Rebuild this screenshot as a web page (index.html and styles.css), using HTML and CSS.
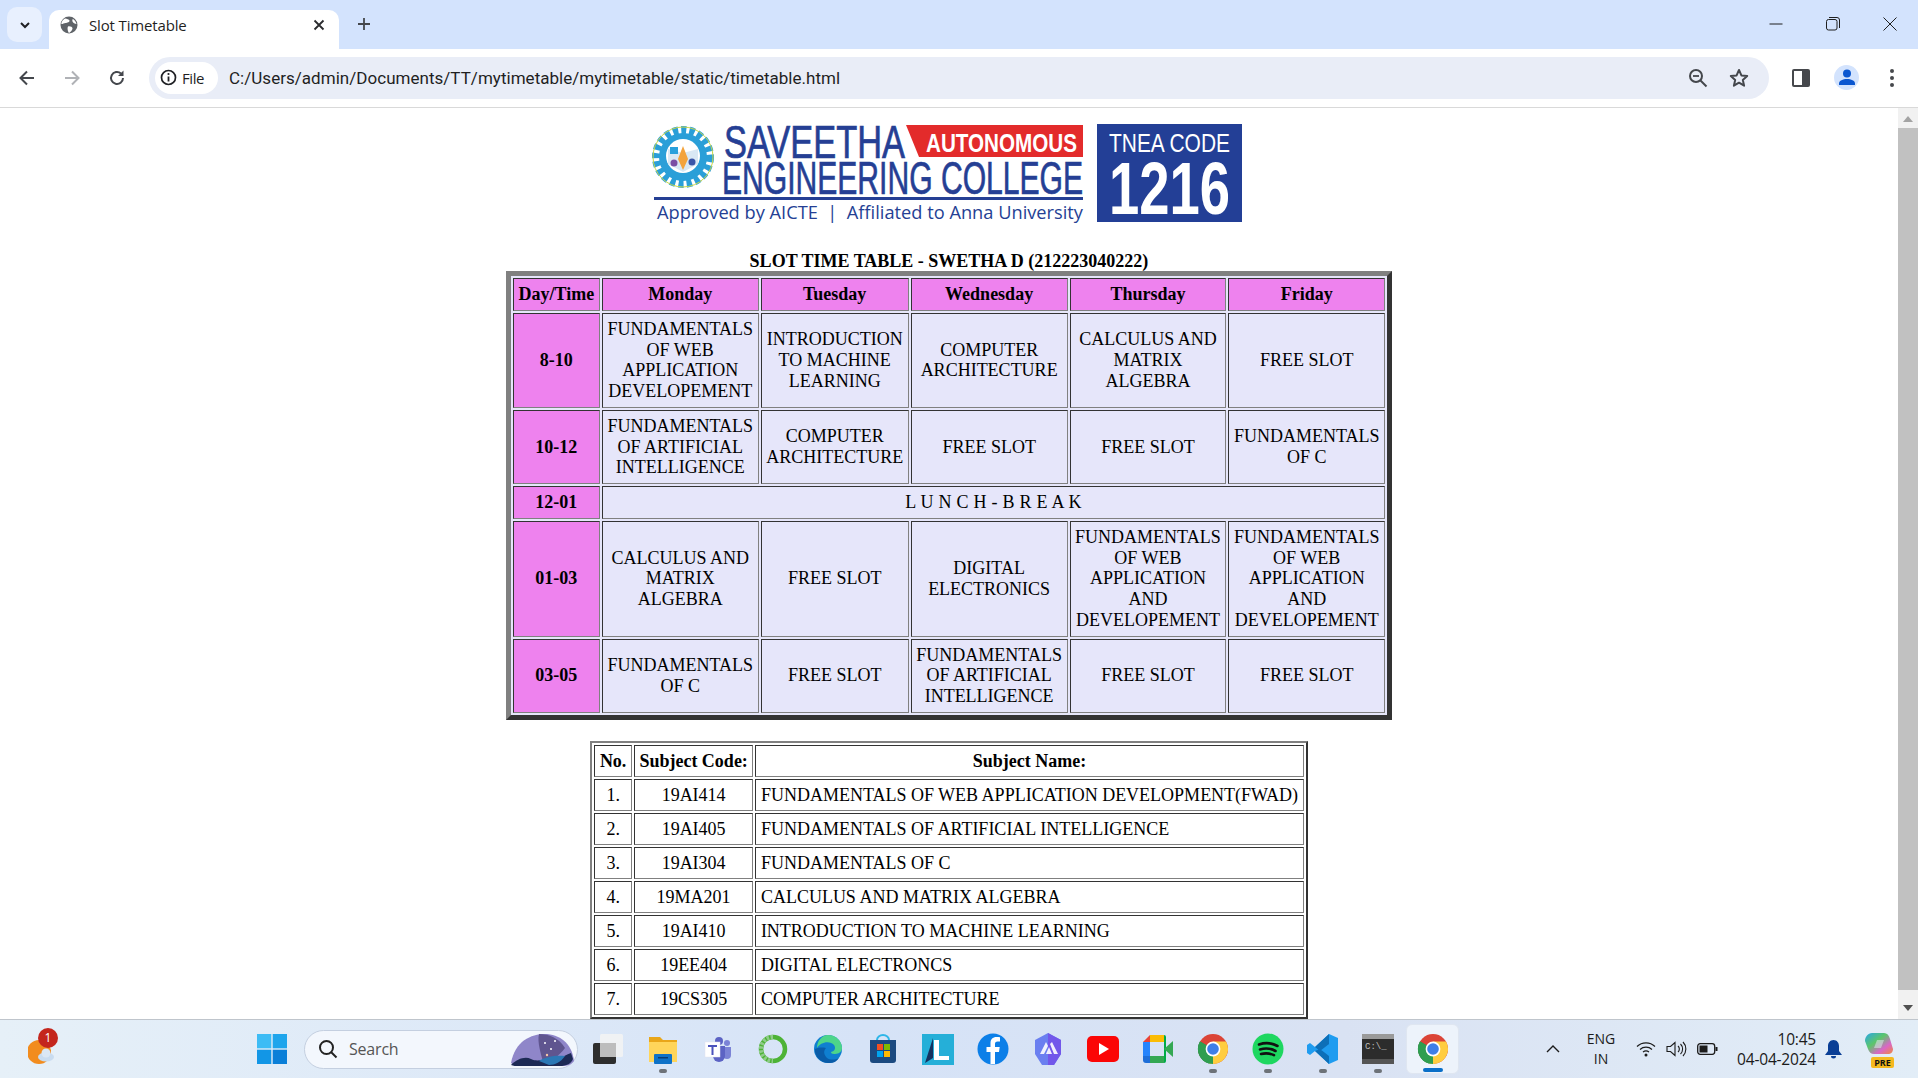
FILE: index.html
```html
<!DOCTYPE html>
<html lang="en">
<head>
<meta charset="utf-8">
<title>Slot Timetable</title>
<link rel="stylesheet" href="styles.css">
</head>
<body>
<svg class="defs" width="0" height="0" aria-hidden="true">
  <defs>
    <symbol id="chrome" viewBox="0 0 32 32">
      <circle cx="16" cy="16" r="15" fill="#db4437"/>
      <path d="M16 16 L3 8.5 A15 15 0 0 0 12 30.5 Z" fill="#0f9d58"/>
      <path d="M16 16 L12 30.5 A15 15 0 0 0 29 8.5 L16 8.5 Z" fill="#ffcd40"/>
      <path d="M16 16 L16 31 A15 15 0 0 1 3 8.5 Z" fill="#2f9e50"/>
      <circle cx="16" cy="16" r="7.4" fill="#fff"/>
      <circle cx="16" cy="16" r="5.8" fill="#3f7fe8"/>
    </symbol>
  </defs>
</svg>
<header class="tabstrip">
  <button class="tabs-menu"><svg width="12" height="12" viewBox="0 0 12 12"><path d="M2 4l4 4 4-4" fill="none" stroke="#1f2024" stroke-width="2"/></svg></button>
  <div class="tab">
    <svg class="favicon" width="18" height="18" viewBox="0 0 18 18"><circle cx="9" cy="9" r="8.5" fill="#5f6368"/><path d="M5 2.500c2 .5 4 .5 4.500 2S7 7 5.500 7 2 8.500 1.500 8 2 4 5 2.500zM8 10.500c2-.5 4.500.5 4.500 2S10 16.500 9 17c-1-1-2-5-1-6.500zM13 3c1 .5 3 2.500 3.500 5-1.500 0-3.500-1-4-2.500S12.500 3 13 3z" fill="#fff"/></svg>
    <span class="tab-title">Slot Timetable</span>
    <svg class="tab-close" width="12" height="12" viewBox="0 0 12 12"><path d="M1.500 1.500l9 9M10.500 1.500l-9 9" stroke="#2a2b2e" stroke-width="1.800"/></svg>
  </div>
  <svg class="newtab" width="14" height="14" viewBox="0 0 14 14"><path d="M7 1v12M1 7h12" stroke="#44474c" stroke-width="1.800"/></svg>
  <div class="winctl">
    <svg width="14" height="14" viewBox="0 0 14 14"><path d="M0.500 7h13" stroke="#1f1f1f" stroke-width="1"/></svg>
    <svg width="14" height="14" viewBox="0 0 14 14"><rect x="0.500" y="2.500" width="10.500" height="10.500" rx="2" fill="none" stroke="#1f1f1f"/><path d="M3 .5h8a2.500 2.500 0 0 1 2.500 2.500v8" fill="none" stroke="#1f1f1f"/></svg>
    <svg width="14" height="14" viewBox="0 0 14 14"><path d="M.500.500l13 13M13.500.500l-13 13" stroke="#1f1f1f" stroke-width="1"/></svg>
  </div>
</header>
<nav class="toolbar">
  <svg class="navbtn" width="18" height="18" viewBox="0 0 18 18"><path d="M16 9H3M9 2.500L2.500 9 9 15.500" fill="none" stroke="#44474c" stroke-width="2"/></svg>
  <svg class="navbtn" width="18" height="18" viewBox="0 0 18 18"><path d="M2 9h13M9 2.500L15.500 9 9 15.500" fill="none" stroke="#b0b2b6" stroke-width="2"/></svg>
  <svg class="navbtn" width="18" height="18" viewBox="0 0 18 18"><path d="M15 9a6 6 0 1 1-2-4.500" fill="none" stroke="#44474c" stroke-width="2"/><path d="M15.500 1.500v5.500H10z" fill="#44474c"/></svg>
  <div class="omnibox">
    <div class="chip">
      <svg width="17" height="17" viewBox="0 0 17 17"><circle cx="8.500" cy="8.500" r="7" fill="none" stroke="#1f2024" stroke-width="1.700"/><path d="M8.500 7.500v5" stroke="#1f2024" stroke-width="1.800"/><circle cx="8.500" cy="5" r="1.100" fill="#1f2024"/></svg>
      <span>File</span>
    </div>
    <span class="url">C:/Users/admin/Documents/TT/mytimetable/mytimetable/static/timetable.html</span>
    <svg class="zoomicon" width="20" height="20" viewBox="0 0 20 20"><circle cx="8" cy="8" r="6" fill="none" stroke="#44474c" stroke-width="2"/><path d="M12.500 12.500l6 6" stroke="#44474c" stroke-width="2"/><path d="M5 8h6" stroke="#44474c" stroke-width="1.800"/></svg>
    <svg class="star" width="20" height="20" viewBox="0 0 20 20"><path d="M10 2l2.400 5.400 5.800.6-4.400 3.900 1.300 5.800L10 14.700l-5.100 3 1.300-5.800L1.800 8l5.800-.6z" fill="none" stroke="#44474c" stroke-width="2" stroke-linejoin="round"/></svg>
  </div>
  <svg class="sidepanel" width="18" height="18" viewBox="0 0 18 18"><rect width="18" height="18" rx="2" fill="#46484c"/><rect x="2" y="2" width="8" height="14" fill="#fff"/></svg>
  <div class="avatar"><svg width="18" height="17" viewBox="0 0 18 17"><circle cx="9" cy="4.500" r="4" fill="#0b57d0"/><path d="M1 16v-1.500C1 11.500 5 10 9 10s8 1.500 8 4.500V16z" fill="#0b57d0"/></svg></div>
  <svg class="menu" width="6" height="18" viewBox="0 0 6 18"><circle cx="3" cy="2" r="2" fill="#46484c"/><circle cx="3" cy="9" r="2" fill="#46484c"/><circle cx="3" cy="16" r="2" fill="#46484c"/></svg>
</nav>
<div class="viewport">
  <main class="page">
    <div class="logo">
      <svg width="592" height="112" viewBox="0 -10 592 112" role="img" aria-label="Saveetha Engineering College">
        <circle cx="31" cy="35" r="26" fill="none" stroke="#2a9fd8" stroke-width="10" stroke-dasharray="5 3"/>
        <circle cx="31" cy="35" r="30" fill="none" stroke="#c7d64a" stroke-width="1"/>
        <circle cx="31" cy="35" r="24" fill="#2a9fd8"/>
        <circle cx="31" cy="34" r="17" fill="#fff"/>
        <path d="M16 27l15 4 15-4v15l-15 8-15-8z" fill="#d9e8f4"/>
        <path d="M31 24l5 13-5 11-5-11z" fill="#f3a33c"/>
        <rect x="18" y="25" width="8" height="7" fill="#29a0dc"/>
        <circle cx="22" cy="41" r="3.500" fill="#7b4ea3"/>
        <circle cx="40" cy="40" r="3.500" fill="#3a56a8"/>
        <text class="lg-navy" x="72" y="36" font-size="46" textLength="181" lengthAdjust="spacingAndGlyphs">SAVEETHA</text>
        <path d="M254 3H431V35H267z" fill="#e32b2b"/>
        <text class="lg-auto" x="274" y="30" font-size="25" textLength="151" lengthAdjust="spacingAndGlyphs">AUTONOMOUS</text>
        <text class="lg-navy" x="70" y="72" font-size="46" textLength="361" lengthAdjust="spacingAndGlyphs">ENGINEERING COLLEGE</text>
        <rect x="2" y="75" width="429" height="3" fill="#253f94"/>
        <text class="lg-sub" x="5" y="97" font-size="19" textLength="426" lengthAdjust="spacingAndGlyphs">Approved by AICTE  |  Affiliated to Anna University</text>
        <rect x="445" y="2" width="145" height="98" fill="#233f96"/>
        <text class="lg-tnea" x="457" y="30" font-size="25" textLength="121" lengthAdjust="spacingAndGlyphs">TNEA CODE</text>
        <text class="lg-code" x="457" y="92" font-size="74" textLength="121" lengthAdjust="spacingAndGlyphs">1216</text>
      </svg>
    </div>
    <h1 class="title">SLOT TIME TABLE - SWETHA D (212223040222)</h1>
    <table class="slots">
      <tr><th>Day/Time</th><th>Monday</th><th>Tuesday</th><th>Wednesday</th><th>Thursday</th><th>Friday</th></tr>
      <tr><th>8-10</th><td>FUNDAMENTALS OF WEB APPLICATION DEVELOPEMENT</td><td>INTRODUCTION TO MACHINE LEARNING</td><td>COMPUTER ARCHITECTURE</td><td>CALCULUS AND MATRIX ALGEBRA</td><td>FREE SLOT</td></tr>
      <tr><th>10-12</th><td>FUNDAMENTALS OF ARTIFICIAL INTELLIGENCE</td><td>COMPUTER ARCHITECTURE</td><td>FREE SLOT</td><td>FREE SLOT</td><td>FUNDAMENTALS OF C</td></tr>
      <tr><th>12-01</th><td colspan="5" class="lunch">L U N C H - B R E A K</td></tr>
      <tr><th>01-03</th><td>CALCULUS AND MATRIX ALGEBRA</td><td>FREE SLOT</td><td>DIGITAL ELECTRONICS</td><td>FUNDAMENTALS OF WEB APPLICATION AND DEVELOPEMENT</td><td>FUNDAMENTALS OF WEB APPLICATION AND DEVELOPEMENT</td></tr>
      <tr><th>03-05</th><td>FUNDAMENTALS OF C</td><td>FREE SLOT</td><td>FUNDAMENTALS OF ARTIFICIAL INTELLIGENCE</td><td>FREE SLOT</td><td>FREE SLOT</td></tr>
    </table>
    <table class="subjects">
      <tr><th>No.</th><th>Subject Code:</th><th>Subject Name:</th></tr>
      <tr><td>1.</td><td>19AI414</td><td class="name">FUNDAMENTALS OF WEB APPLICATION DEVELOPMENT(FWAD)</td></tr>
      <tr><td>2.</td><td>19AI405</td><td class="name">FUNDAMENTALS OF ARTIFICIAL INTELLIGENCE</td></tr>
      <tr><td>3.</td><td>19AI304</td><td class="name">FUNDAMENTALS OF C</td></tr>
      <tr><td>4.</td><td>19MA201</td><td class="name">CALCULUS AND MATRIX ALGEBRA</td></tr>
      <tr><td>5.</td><td>19AI410</td><td class="name">INTRODUCTION TO MACHINE LEARNING</td></tr>
      <tr><td>6.</td><td>19EE404</td><td class="name">DIGITAL ELECTRONCS</td></tr>
      <tr><td>7.</td><td>19CS305</td><td class="name">COMPUTER ARCHITECTURE</td></tr>
    </table>
  </main>
  <aside class="scrollbar">
    <svg class="arrow" width="10" height="6" viewBox="0 0 10 6"><path d="M5 0l5 6H0z" fill="#a3a3a3"/></svg>
    <div class="thumb"></div>
    <svg class="arrow" width="10" height="6" viewBox="0 0 10 6"><path d="M0 0h10L5 6z" fill="#505050"/></svg>
  </aside>
</div>
<footer class="taskbar">
  <div class="widget">
    <svg width="32" height="36" viewBox="0 0 32 36"><circle cx="11" cy="21" r="12" fill="#f28c1e"/><ellipse cx="18" cy="26" rx="8" ry="4.500" fill="#c9dcf0"/><circle cx="18" cy="22" r="4.500" fill="#dbe7f4"/></svg>
    <span class="badge">1</span>
  </div>
  <div class="start-slot">
    <svg width="30" height="30" viewBox="0 0 30 30"><rect width="14.300" height="14.300" fill="#3dbcf5"/><rect x="15.700" width="14.300" height="14.300" fill="#1ea5ec"/><rect y="15.700" width="14.300" height="14.300" fill="#1296e6"/><rect x="15.700" y="15.700" width="14.300" height="14.300" fill="#0a7fd8"/></svg>
  </div>
  <div class="search">
    <svg width="20" height="20" viewBox="0 0 20 20"><circle cx="8.500" cy="8.500" r="6.500" fill="none" stroke="#222" stroke-width="2"/><path d="M13 13l5.500 5.500" stroke="#222" stroke-width="2"/></svg>
    <span>Search</span>
    <svg class="search-art" width="66" height="34" viewBox="0 0 66 34"><path d="M2 30C6 8 22 1 36 1s27 9 29 27c-2 3-6 5-12 5H14C8 33 4 32 2 30z" fill="#8f86c9"/><path d="M30 1c10 0 20 4 26 14-6 8-14 14-22 14-2-8-6-20-4-28z" fill="#5f558f"/><path d="M2 32c6-6 14-9 20-6s10 0 16 2 14-4 24-8l2 6c-2 5-7 7-13 7H10c-3 0-6 0-8-1z" fill="#1d2a55"/><path d="M30 28c6-4 16-6 26-5-4 6-10 9-16 9z" fill="#2c78b5"/><circle cx="36" cy="10" r="1" fill="#fff"/><circle cx="42" cy="16" r="1" fill="#fff"/><circle cx="46" cy="8" r="1" fill="#fff"/><circle cx="38" cy="22" r="1.200" fill="#f5c6a5"/></svg>
  </div>
  <ul class="apps">
    <li>
      <svg width="30" height="30" viewBox="0 0 30 30"><rect x="0" y="9" width="23" height="21" rx="2" fill="#2e2e2e"/><rect x="7" y="0" width="23" height="23" rx="1.500" fill="#f3f3f3" opacity=".85"/><rect x="7" y="9" width="16" height="14" fill="#bdbdbd"/></svg>
    </li>
    <li class="open">
      <svg width="30" height="30" viewBox="0 0 30 30"><path d="M1 3h11l3 3h14v22H1z" fill="#e9a619"/><rect x="1" y="8" width="28" height="20" fill="#ffd55a"/><rect x="6" y="20" width="18" height="10" rx="1" fill="#0f72c8"/><rect x="10" y="23" width="10" height="1.500" fill="#083c74"/></svg>
    </li>
    <li>
      <svg width="28" height="28" viewBox="0 0 28 28"><circle cx="23" cy="8" r="3" fill="#7b83d6"/><path d="M19 12h8v8a4 4 0 0 1-8 0z" fill="#7b83d6"/><circle cx="15" cy="6" r="4" fill="#5c63c4"/><path d="M9 11h12v10a6 6 0 0 1-12 0z" fill="#5c63c4"/><rect x="1" y="7" width="15" height="15" fill="#fff" stroke="#e4e4ee" stroke-width=".5"/><path d="M4 10h9v2H9.500v8h-2v-8H4z" fill="#4b53bc"/></svg>
    </li>
    <li>
      <svg width="30" height="30" viewBox="0 0 30 30"><circle cx="15" cy="15" r="12" fill="none" stroke="#4db336" stroke-width="4.500"/><path d="M15 3A12 12 0 0 0 15 27" fill="none" stroke="#8fcb8a" stroke-width="4.500" stroke-dasharray="2.500 1.500"/></svg>
    </li>
    <li>
      <svg width="30" height="30" viewBox="0 0 30 30"><circle cx="15" cy="15" r="14" fill="#0f7fd0"/><path d="M15 1c8 0 14 6 14 13 0 5-5 6-8 6-2 0-3-1-3-2 4-1 5-4 3-7-4-5-14-3-17 3C4 7 9 1 15 1z" fill="#4dd58a"/><path d="M2 15c-1 8 7 15 15 14 4 0 7-2 9-5-4 2-9 2-12 0-3-3-4-7-1-10-5-1-9 0-11 1z" fill="#0a5ca8"/></svg>
    </li>
    <li>
      <svg width="28" height="30" viewBox="0 0 28 30"><path d="M8 6a6 5 0 0 1 12 0" fill="none" stroke="#2fb6e8" stroke-width="2"/><path d="M1 6h26v20a3 3 0 0 1-3 3H4a3 3 0 0 1-3-3z" fill="#1c4a80"/><rect x="8" y="10" width="6" height="6" fill="#f25022"/><rect x="15" y="10" width="6" height="6" fill="#7fba00"/><rect x="8" y="17" width="6" height="6" fill="#00a4ef"/><rect x="15" y="17" width="6" height="6" fill="#ffb900"/></svg>
    </li>
    <li>
      <svg width="32" height="31" viewBox="0 0 32 31"><rect width="32" height="31" fill="#25afd8"/><path d="M11 4v20l-8 5z" fill="#15325f"/><path d="M12 6h5v16h10v4H12z" fill="#fff"/></svg>
    </li>
    <li>
      <svg width="32" height="32" viewBox="0 0 32 32"><circle cx="16" cy="16" r="15.500" fill="#0c7fe8"/><path d="M18 31V19h4l.7-5H18v-3c0-1.500.6-2.500 2.600-2.500H23V4.200c-1-.2-2.300-.3-3.500-.3-3.700 0-6 2.200-6 6.300V14H9.500v5h4v12z" fill="#fff"/></svg>
    </li>
    <li>
      <svg width="30" height="34" viewBox="0 0 30 34"><path d="M15 1l13 7v14l-7 11H9L2 22V8z" fill="#6a7ff0"/><path d="M15 1l13 7v14l-7 11h-6z" fill="#7257ea"/><path d="M7 22l6-12 2 4-4 8zM13 22l3-7 3 7zM21 22l-4-10 2-2 6 12z" fill="#fff" opacity=".9"/></svg>
    </li>
    <li>
      <svg width="32" height="26" viewBox="0 0 32 26"><rect width="32" height="26" rx="5" fill="#fb0606"/><path d="M12 7l10 6-10 6z" fill="#fff"/></svg>
    </li>
    <li>
      <svg width="30" height="28" viewBox="0 0 30 28"><path d="M7 0h14v7H7z" fill="#fbbc04"/><path d="M7 0v7H0z" fill="#ea4335"/><rect y="7" width="7" height="14" fill="#2684fc"/><path d="M0 21h7v7H3a3 3 0 0 1-3-3z" fill="#1e6ed8"/><rect x="7" y="21" width="14" height="7" fill="#34a853"/><path d="M21 0a2 2 0 0 1 2 2v24a2 2 0 0 1-2 2z" fill="#00ac47"/><path d="M21 14l9-8v16z" fill="#34a853"/></svg>
    </li>
    <li class="open"><svg width="32" height="32"><use href="#chrome"/></svg></li>
    <li class="open">
      <svg width="32" height="32" viewBox="0 0 32 32"><circle cx="16" cy="16" r="15.500" fill="#1ed760"/><path d="M7 11.500c6-2 13-1.500 18.500 1.500M8 16.500c5-1.500 11-1 15.500 1.500M9 21c4-1 9-.8 13 1.200" fill="none" stroke="#111" stroke-width="2.600" stroke-linecap="round"/></svg>
    </li>
    <li class="open">
      <svg width="32" height="32" viewBox="0 0 32 32"><path d="M22 1l9 4v22l-9 4-14-13-5 4-3-2V12l3-2 5 4z" fill="#1f9cf0"/><path d="M22 1v30l-14-13 5-2 9 7V11l-9 7-5-4z" fill="#0d6fb8"/></svg>
    </li>
    <li class="open">
      <svg width="32" height="30" viewBox="0 0 32 30"><rect width="32" height="30" rx="2" fill="#2c2c2c"/><rect width="32" height="5" fill="#9a9a9a"/><rect y="25" width="32" height="5" fill="#555"/><text class="term" x="3" y="15" font-size="9">C:\_</text></svg>
    </li>
    <li class="active"><svg width="32" height="32"><use href="#chrome"/></svg></li>
  </ul>
  <div class="tray">
    <svg class="tray-up" width="14" height="8" viewBox="0 0 14 8"><path d="M1 7l6-6 6 6" fill="none" stroke="#1b1b1b" stroke-width="1.400"/></svg>
    <div class="lang"><span>ENG</span><span>IN</span></div>
    <svg class="tray-ico" width="20" height="16" viewBox="0 0 20 16"><path d="M1 5.500a13 13 0 0 1 18 0M4 8.500a9 9 0 0 1 12 0M7 11a5 5 0 0 1 6 0" fill="none" stroke="#1b1b1b" stroke-width="1.200"/><circle cx="10" cy="14" r="1.500" fill="#1b1b1b"/></svg>
    <svg class="tray-ico" width="21" height="16" viewBox="0 0 21 16"><path d="M1 5.500h3.500L9 1.500v13l-4.500-4H1z" fill="none" stroke="#1b1b1b" stroke-width="1.100"/><path d="M12 5a4 4 0 0 1 0 6M14.500 3a7 7 0 0 1 0 10M17 1a10 10 0 0 1 0 14" fill="none" stroke="#1b1b1b" stroke-width="1.100"/></svg>
    <svg class="tray-ico" width="21" height="12" viewBox="0 0 21 12"><rect x=".7" y=".7" width="17" height="10.600" rx="2.500" fill="none" stroke="#1b1b1b" stroke-width="1.300"/><rect x="2.500" y="2.500" width="8" height="7" fill="#1b1b1b"/><rect x="18.500" y="4" width="2" height="4" fill="#1b1b1b"/></svg>
    <div class="clock"><span>10:45</span><span>04-04-2024</span></div>
    <svg class="bell" width="17" height="19" viewBox="0 0 17 19"><path d="M8.500 0C5 0 3 3 3 6v5l-3 4h17l-3-4V6c0-3-2-6-5.500-6z" fill="#0a3f96"/><path d="M6 16h5a2.500 2.500 0 0 1-5 0z" fill="#0a3f96"/></svg>
    <div class="copilot">
      <svg width="30" height="24" viewBox="0 0 30 24"><defs><linearGradient id="cp" x1="0" y1="0" x2="1" y2="1"><stop offset="0" stop-color="#2aa6e8"/><stop offset=".4" stop-color="#5cc66a"/><stop offset=".7" stop-color="#d966c8"/><stop offset="1" stop-color="#f08a3a"/></linearGradient></defs><path d="M8 1h12c3 0 5 2 6 6l3 10c0 3-2 5-5 5H10c-3 0-5-2-6-5L1 9c0-4 3-8 7-8z" fill="url(#cp)"/><path d="M13 8h7l-3 8h-7z" fill="#e8eef8" opacity=".5"/></svg>
      <span class="pre">PRE</span>
    </div>
  </div>
</footer>
</body>
</html>
```
FILE: styles.css
```css
* { box-sizing: border-box; }
html, body { margin: 0; height: 100%; overflow: hidden; }
body { display: flex; flex-direction: column; background: #fff; font-family: "Liberation Serif", serif; color: #000; }
.defs { position: absolute; }

/* Browser chrome */
.tabstrip { height: 49px; flex: none; background: #d3e3fd; display: flex; align-items: flex-end; padding-left: 7px; position: relative; }
.tabs-menu { width: 35px; height: 35px; margin-bottom: 7px; border: 0; padding: 0; border-radius: 10px; background: #e8f0fe; display: flex; align-items: center; justify-content: center; }
.tab { width: 290px; height: 39px; margin-left: 7px; background: #fff; border-radius: 10px 10px 0 0; display: flex; align-items: center; padding: 0 14px 10px 11px; }
.favicon { flex: none; }
.tab-title { margin-left: 11px; flex: 1; font: 15px "Open Sans", sans-serif; letter-spacing: -.15px; color: #1f1f1f; }
.newtab { margin: 0 0 18px 18px; }
.winctl { margin-left: auto; align-self: flex-start; margin-top: 17px; display: flex; gap: 43px; padding-right: 21px; }

.toolbar { height: 59px; flex: none; background: #fff; border-bottom: 1px solid #d9d9d9; border-radius: 10px 10px 0 0; display: flex; align-items: center; padding: 0 0 1px 18px; }
.navbtn { flex: none; margin-right: 27px; }
.navbtn:nth-of-type(3) { margin-right: 23px; }
.omnibox { width: 1620px; height: 42px; border-radius: 21px; background: #e9edf7; display: flex; align-items: center; padding-left: 6px; padding-right: 20px; flex: none; }
.chip { height: 32px; width: 63px; border-radius: 16px; background: #fff; display: flex; align-items: center; gap: 5px; padding-left: 5px; font: 15px "Open Sans", sans-serif; letter-spacing: -.4px; color: #1f1f1f; flex: none; }
.url { margin-left: 11px; padding-top: 1px; font: 17px Roboto, sans-serif; letter-spacing: .03px; color: #1f1f1f; white-space: nowrap; }
.zoomicon { margin-left: auto; }
.star { margin-left: 21px; }
.sidepanel { margin-left: 23px; flex: none; }
.avatar { margin-left: 24px; width: 25px; height: 25px; border-radius: 50%; background: #d3e3fd; display: flex; align-items: center; justify-content: center; flex: none; }
.menu { margin-left: 30px; flex: none; }

/* Page */
.viewport { flex: 1; min-height: 0; display: flex; }
.page { flex: 1; min-width: 0; overflow: hidden; padding-top: 4px; }
.logo { display: flex; justify-content: center; height: 113px; padding-right: 2px; }
.title { margin: 26px 0 0; font-size: 18px; line-height: 20px; font-weight: 700; text-align: center; }
table { border-collapse: separate; border-spacing: 2px; margin: 0 auto; font-size: 18px; line-height: 20.75px; text-align: center; }
th, td { padding: 5px 4.6px; font-weight: 400; vertical-align: middle; }
th { font-weight: 700; }
.slots { width: min-content; background: #e6e6fa; border: 5px solid; border-color: #808080 #333 #333 #808080; }
.slots td, .slots th { border: 1px solid; border-color: #333 #808080 #808080 #333; }
.slots th { background: #ee82ee; }
.slots td { background: #e6e6fa; }
.slots td.lunch { letter-spacing: .25px; }
.subjects { margin-top: 21px; background: #fff; line-height: 20px; border: 2px solid; border-color: #808080 #333 #333 #808080; }
.subjects td, .subjects th { padding: 5px 4.5px; border: 1px solid; border-color: #333 #808080 #808080 #333; }
.subjects td.name { text-align: left; }

.scrollbar { width: 20px; flex: none; background: #f1f1f1; display: flex; flex-direction: column; align-items: center; padding: 8px 0 8px; }
.thumb { width: 100%; flex: 1; background: #c1c1c1; margin: 6px 0 15px; }
.arrow { flex: none; }

/* Taskbar */
.taskbar { height: 59px; flex: none; border-top: 1px solid #bfc5cc; background: linear-gradient(90deg, #e6f0f8 0%, #d6e3f7 45%, #d9e2f3 70%, #e2edf7 100%); display: flex; align-items: center; font-family: "Open Sans", sans-serif; color: #1b1b1b; }
.widget { width: 244px; height: 100%; position: relative; display: flex; align-items: center; padding: 0 0 0 28px; flex: none; }
.badge { position: absolute; left: 38px; top: 8px; width: 20px; height: 20px; border-radius: 50%; background: #c4261d; color: #fff; font: 12px/20px "Open Sans", sans-serif; text-align: center; }
.start-slot { width: 55px; display: flex; justify-content: center; flex: none; }
.search { width: 274px; height: 39px; margin-left: 5px; border-radius: 20px; background: #f3f7fd; border: 1px solid #c4cfe0; display: flex; align-items: center; padding-left: 13px; position: relative; flex: none; font-size: 16px; color: #555; letter-spacing: -.2px; }
.search span { margin-left: 11px; }
.search-art { position: absolute; right: 2px; bottom: 1px; }
.apps { list-style: none; margin: 0 0 0 2px; padding: 0; display: flex; flex: none; }
.apps li { width: 55px; height: 50px; display: flex; align-items: center; justify-content: center; position: relative; }
.apps li.open::after, .apps li.active::after { content: ""; position: absolute; bottom: 1px; left: 50%; margin-left: -4px; width: 8px; height: 4px; border-radius: 2px; background: #6d7278; }
.apps li.active { background: #edf3fb; border-radius: 6px; border: 1px solid #dfe6f1; width: 53px; margin: 0 1px; }
.apps li.active::after { width: 20px; margin-left: -10px; background: #0a6fc8; }
.tray { margin-left: auto; display: flex; align-items: center; padding-right: 22px; }
.tray-up { margin-right: 21px; }
.lang { width: 40px; display: flex; flex-direction: column; align-items: center; font-size: 14px; line-height: 20px; margin-right: 15px; }
.tray-ico { margin-right: 10px; }
.clock { width: 88px; display: flex; flex-direction: column; align-items: flex-end; font-size: 15.500px; line-height: 20px; letter-spacing: -.2px; }
.bell { margin-left: 9px; }
.copilot { margin-left: 22px; width: 32px; height: 34px; position: relative; }
.pre { position: absolute; left: 7px; bottom: -2px; width: 23px; height: 11px; border-radius: 2px; background: #f5b91f; color: #111; font: 700 9px/11px "Open Sans", sans-serif; text-align: center; }

/* Logo and icon text */
.lg-navy { font-family: "Liberation Sans", sans-serif; fill: #253f94; stroke: #253f94; stroke-width: .7px; }
.lg-auto { font-family: "Liberation Sans", sans-serif; font-weight: 700; fill: #fff; }
.lg-sub { font-family: "Open Sans", sans-serif; fill: #253f94; white-space: pre; }
.lg-tnea { font-family: "Liberation Sans", sans-serif; fill: #fff; }
.lg-code { font-family: "Liberation Sans", sans-serif; font-weight: 700; fill: #fff; }
.term { font-family: "Liberation Mono", monospace; fill: #bbb; }
```
